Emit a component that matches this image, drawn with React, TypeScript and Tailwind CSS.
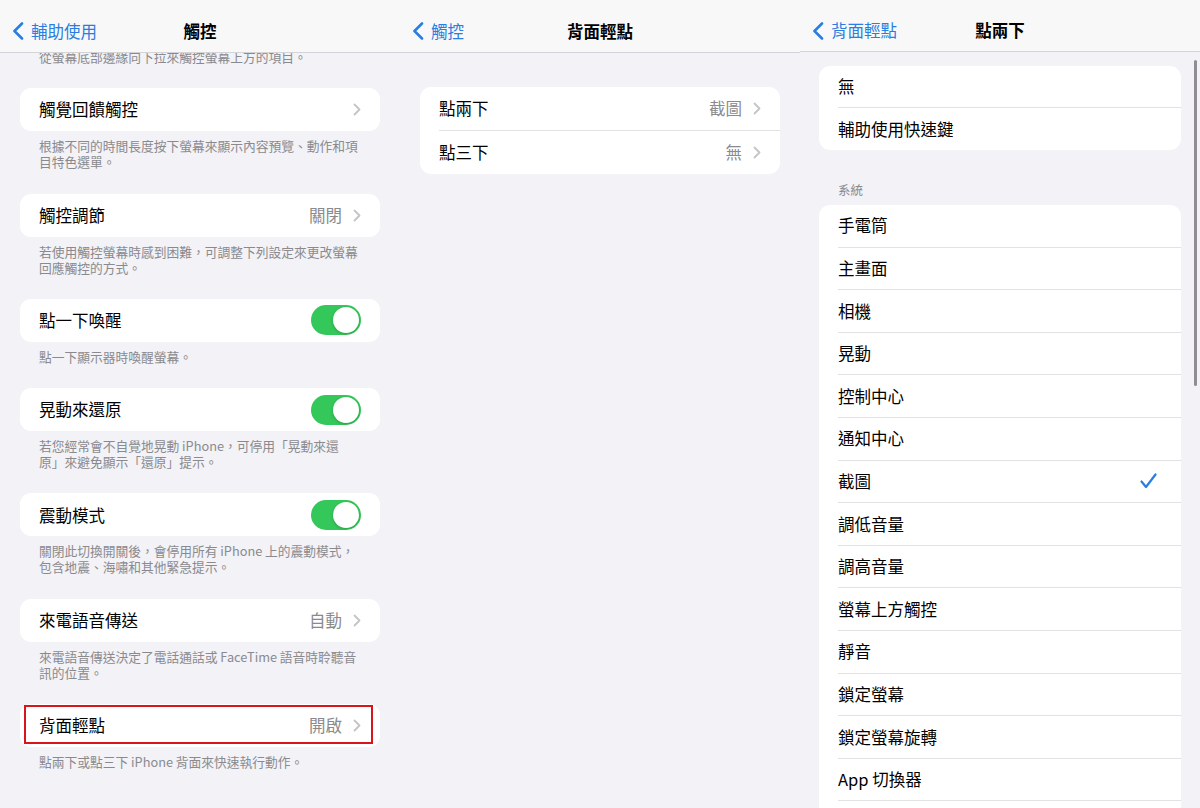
import React from "react";

const FONT = { fontFamily: '"Noto Sans CJK TC", "Noto Sans", sans-serif' };

function BackChevron() {
  return (
    <svg width="12" height="18" viewBox="0 0 12 18" fill="none">
      <path d="M10 1.5L2.5 9L10 16.5" stroke="#2a7de1" strokeWidth="2.6" strokeLinecap="round" strokeLinejoin="round" />
    </svg>
  );
}

function Chevron() {
  return (
    <svg width="8" height="13" viewBox="0 0 8 13" fill="none">
      <path d="M1.5 1.5L6.5 6.5L1.5 11.5" stroke="#c4c4c7" strokeWidth="1.8" strokeLinecap="round" strokeLinejoin="round" />
    </svg>
  );
}

function Check() {
  return (
    <svg width="17" height="16" viewBox="0 0 17 16" fill="none">
      <path d="M1.5 8.5L6 14L15.5 1.5" stroke="#2a7de1" strokeWidth="2.2" strokeLinecap="round" strokeLinejoin="round" />
    </svg>
  );
}

function Toggle() {
  return (
    <div className="w-[50px] h-[30px] rounded-full bg-[#34c759] flex items-center justify-end pr-[2px]">
      <div className="w-[26px] h-[26px] rounded-full bg-white shadow-[0_1px_3px_rgba(0,0,0,0.2)]" />
    </div>
  );
}

function Header({ back, title, h }: { back: string; title: string; h: string }) {
  return (
    <div className={`${h} shrink-0 bg-[#f8f8f8] border-b border-[#d4d4d7] grid grid-cols-[1fr_auto_1fr] items-center pt-[10px] z-10`}>
      <div className="flex items-center pl-[12px] gap-[7px] text-[#2a7de1] text-[16.5px]">
        <BackChevron />
        <span>{back}</span>
      </div>
      <div className="text-[16.5px] font-semibold text-black">{title}</div>
      <div />
    </div>
  );
}

function Footer({ lines, first }: { lines: string[]; first?: boolean }) {
  return (
    <div className={`pl-[39px] ${first ? "mt-[-4px]" : "pt-[7px]"} pb-[23.3px] text-[12.75px] leading-[16px] text-[#8a8a8e]`}>
      {lines.map((l, i) => (
        <div key={i} className="whitespace-nowrap">{l}</div>
      ))}
    </div>
  );
}

function Card({ children, highlight }: { children: React.ReactNode; highlight?: boolean }) {
  return (
    <div className="relative mx-[20px] h-[43px] bg-white rounded-[11px] pl-[19px] pr-[19px] flex items-center justify-between">
      {children}
      {highlight && (
        <div className="absolute left-[4px] right-[7px] top-[1px] bottom-[3px] border-2 border-[#d8151d]" />
      )}
    </div>
  );
}

function Value({ text }: { text: string }) {
  return (
    <div className="flex items-center gap-[11px]">
      <span className="text-[16.5px] text-[#8a8a8e]">{text}</span>
      <Chevron />
    </div>
  );
}

function Label({ text }: { text: string }) {
  return <span className="text-[16.5px] text-black">{text}</span>;
}

function Panel1() {
  return (
    <div className="w-[400px] h-[808px] bg-[#f2f2f7] flex flex-col overflow-hidden">
      <Header back="輔助使用" title="觸控" h="h-[53px]" />
      <div className="flex-1 overflow-hidden">
        <Footer first lines={["從螢幕底部邊緣向下拉來觸控螢幕上方的項目。"]} />
        <Card>
          <Label text="觸覺回饋觸控" />
          <Chevron />
        </Card>
        <Footer lines={["根據不同的時間長度按下螢幕來顯示內容預覽、動作和項", "目特色選單。"]} />
        <Card>
          <Label text="觸控調節" />
          <Value text="關閉" />
        </Card>
        <Footer lines={["若使用觸控螢幕時感到困難，可調整下列設定來更改螢幕", "回應觸控的方式。"]} />
        <Card>
          <Label text="點一下喚醒" />
          <Toggle />
        </Card>
        <Footer lines={["點一下顯示器時喚醒螢幕。"]} />
        <Card>
          <Label text="晃動來還原" />
          <Toggle />
        </Card>
        <Footer lines={["若您經常會不自覺地晃動 iPhone，可停用「晃動來還", "原」來避免顯示「還原」提示。"]} />
        <Card>
          <Label text="震動模式" />
          <Toggle />
        </Card>
        <Footer lines={["關閉此切換開關後，會停用所有 iPhone 上的震動模式，", "包含地震、海嘯和其他緊急提示。"]} />
        <Card>
          <Label text="來電語音傳送" />
          <Value text="自動" />
        </Card>
        <Footer lines={["來電語音傳送決定了電話通話或 FaceTime 語音時聆聽音", "訊的位置。"]} />
        <Card highlight>
          <Label text="背面輕點" />
          <Value text="開啟" />
        </Card>
        <Footer lines={["點兩下或點三下 iPhone 背面來快速執行動作。"]} />
      </div>
    </div>
  );
}

function Panel2() {
  return (
    <div className="w-[400px] h-[808px] bg-[#f2f2f7] flex flex-col overflow-hidden">
      <Header back="觸控" title="背面輕點" h="h-[53px]" />
      <div className="pt-[34px]">
        <div className="mx-[20px] bg-white rounded-[11px] overflow-hidden">
          <div className="h-[43px] pl-[19px] pr-[19px] flex items-center justify-between">
            <Label text="點兩下" />
            <Value text="截圖" />
          </div>
          <div className="ml-[19px] h-px bg-[#e2e2e5]" />
          <div className="h-[43px] pl-[19px] pr-[19px] flex items-center justify-between">
            <Label text="點三下" />
            <Value text="無" />
          </div>
        </div>
      </div>
    </div>
  );
}

function ListRow({ text, checked, last, h }: { text: string; checked?: boolean; last?: boolean; h: string }) {
  return (
    <div>
      <div className={`${h} pl-[19px] pr-[24px] flex items-center justify-between`}>
        <Label text={text} />
        {checked && <Check />}
      </div>
      {!last && <div className="ml-[19px] h-px bg-[#e2e2e5]" />}
    </div>
  );
}

function Panel3() {
  const sys = [
    "手電筒",
    "主畫面",
    "相機",
    "晃動",
    "控制中心",
    "通知中心",
    "截圖",
    "調低音量",
    "調高音量",
    "螢幕上方觸控",
    "靜音",
    "鎖定螢幕",
    "鎖定螢幕旋轉",
    "App 切換器",
    "捏合",
  ];
  return (
    <div className="relative w-[400px] h-[808px] bg-[#f2f2f7] flex flex-col overflow-hidden">
      <Header back="背面輕點" title="點兩下" h="h-[52px]" />
      <div className="flex-1 overflow-hidden pt-[14px]">
        <div className="mx-[19px] bg-white rounded-[11px] overflow-hidden">
          <ListRow text="無" h="h-[41px]" />
          <ListRow text="輔助使用快速鍵" h="h-[42px]" last />
        </div>
        <div className="pl-[38px] pt-[32px] pb-[7px] text-[12.5px] leading-[16px] text-[#8a8a8e]">系統</div>
        <div className="mx-[19px] bg-white rounded-[11px] overflow-hidden">
          {sys.map((s) => (
            <ListRow key={s} text={s} h="h-[41.6px]" checked={s === "截圖"} />
          ))}
        </div>
      </div>
      <div className="absolute right-[3px] top-[60px] w-[3px] h-[326px] rounded-full bg-[#8e8e93]" />
    </div>
  );
}

export default function App() {
  return (
    <div className="w-[1200px] h-[808px] flex overflow-hidden bg-[#f2f2f7]" style={FONT}>
      <Panel1 />
      <Panel2 />
      <Panel3 />
    </div>
  );
}
